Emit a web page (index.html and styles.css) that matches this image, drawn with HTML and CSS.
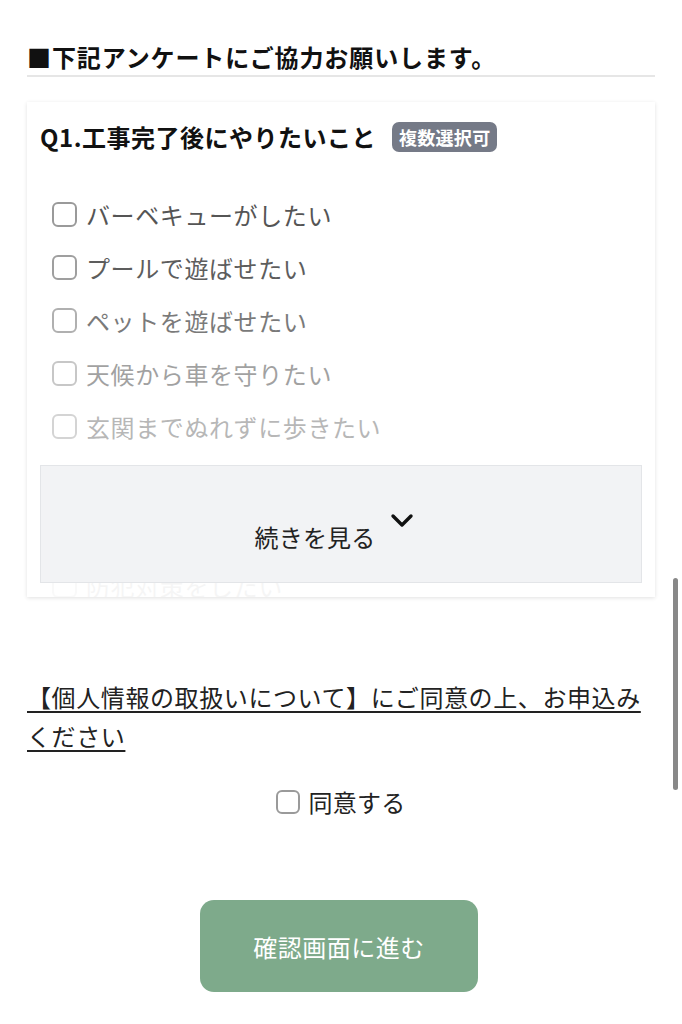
FILE: index.html
```html
<!DOCTYPE html>
<html lang="ja">
<head>
<meta charset="utf-8">
<link rel="stylesheet" href="styles.css">
</head>
<body>
<main class="page">
  <h2 class="section-title">■下記アンケートにご協力お願いします。</h2>

  <section class="card">
    <div class="q-head">
      <span class="q-title">Q1.工事完了後にやりたいこと</span>
      <span class="badge">複数選択可</span>
    </div>
    <ul class="options">
      <li class="opt o1"><span class="box"></span>バーベキューがしたい</li>
      <li class="opt o2"><span class="box"></span>プールで遊ばせたい</li>
      <li class="opt o3"><span class="box"></span>ペットを遊ばせたい</li>
      <li class="opt o4"><span class="box"></span>天候から車を守りたい</li>
      <li class="opt o5"><span class="box"></span>玄関までぬれずに歩きたい</li>
      <li class="opt o6"><span class="box"></span>庭でくつろぎたい</li>
      <li class="opt o7"><span class="box"></span>家庭菜園を楽しみたい</li>
      <li class="opt o8"><span class="box"></span>防犯対策をしたい</li>
    </ul>
    <div class="more">
      <span class="more-text">続きを見る</span>
      <svg class="chev" width="24" height="18" viewBox="0 0 24 18"><polyline points="3,4 12,13 21,4" fill="none" stroke="#111" stroke-width="3.4" stroke-linecap="round" stroke-linejoin="round"/></svg>
    </div>
  </section>

  <p class="privacy"><a href="#">【個人情報の取扱いについて】にご同意の上、お申込みください</a></p>

  <div class="agree"><span class="box"></span>同意する</div>

  <div class="actions">
    <button class="submit" type="button">確認画面に進む</button>
  </div>
</main>
<div class="scrollbar"></div>
</body>
</html>
```

FILE: styles.css
```css
* { box-sizing: border-box; }
html, body { margin: 0; padding: 0; background: #fff; }
body {
  font-family: "Noto Sans CJK JP", "Noto Sans", sans-serif;
  color: #222;
  width: 682px;
  height: 1024px;
  overflow: hidden;
}
.page { padding: 40px 27px 0; }

.section-title {
  margin: 0;
  font-size: 24px;
  line-height: 34px;
  font-weight: 700;
  color: #111;
  letter-spacing: 0.9px;
  border-bottom: 2px solid #e6e6e6;
  padding-bottom: 1px;
}

.card {
  position: relative;
  margin-top: 25px;
  height: 495px;
  overflow: hidden;
  background: #fff;
  box-shadow: 0 1px 4px rgba(0,0,0,0.12);
  padding: 20px 13px 0;
}
.q-head { display: flex; align-items: center; gap: 16px; }
.q-title {
  font-size: 24px;
  line-height: 30px;
  font-weight: 700;
  color: #111;
  letter-spacing: 0.5px;
}
.badge {
  background: #757a87;
  color: #fff;
  font-size: 18px;
  font-weight: 700;
  line-height: 30px;
  padding: 0 7px;
  border-radius: 7px;
  letter-spacing: 0.3px;
}
.options {
  list-style: none;
  margin: 36px 0 0;
  padding: 0 0 0 12px;
}
.opt {
  display: flex;
  align-items: center;
  height: 53px;
  font-size: 24px;
  letter-spacing: 0.6px;
  color: #555;
}
.box {
  width: 25px;
  height: 25px;
  border: 2px solid #9a9a9a;
  border-radius: 6px;
  margin-right: 9px;
  flex: none;
  background: #fff;
}
.o1 { opacity: 1; }
.o2 { opacity: 0.95; }
.o3 { opacity: 0.78; }
.o4 { opacity: 0.55; }
.o5 { opacity: 0.42; }
.o6, .o7 { visibility: hidden; }
.o8 { opacity: 0.05; }

.more {
  position: absolute;
  left: 13px;
  right: 13px;
  bottom: 14px;
  height: 118px;
  background: #f2f3f5;
  border: 1px solid #e3e5e8;
  display: flex;
  justify-content: center;
  align-items: flex-start;
  padding-top: 54px;
  gap: 14px;
  padding-right: 14px;
}
.more-text { font-size: 24px; line-height: 34px; color: #222; letter-spacing: 0.2px; }
.chev { margin-top: -8px; }

.privacy {
  margin: 80px 0 0;
  font-size: 24px;
  line-height: 39px;
  letter-spacing: 0.6px;
}
.privacy a { color: #222; text-decoration: underline; text-underline-offset: 4px; text-decoration-thickness: 2px; }

.agree {
  margin-top: 32px;
  display: flex;
  justify-content: center;
  align-items: center;
  font-size: 24px;
  line-height: 30px;
  color: #222;
  letter-spacing: 0.3px;
}
.agree .box { width: 24px; height: 24px; margin-right: 8px; }

.actions { display: flex; justify-content: center; margin-top: 83px; }
.submit {
  width: 278px;
  height: 92px;
  border: none;
  border-radius: 14px;
  background: #7eaa8b;
  color: #fff;
  font-family: inherit;
  font-size: 24px;
  letter-spacing: 0.5px;
  margin-left: -4px;
}

.scrollbar {
  position: fixed;
  left: 673px;
  top: 578px;
  width: 5px;
  height: 212px;
  background: #888;
  border-radius: 3px;
}
```
